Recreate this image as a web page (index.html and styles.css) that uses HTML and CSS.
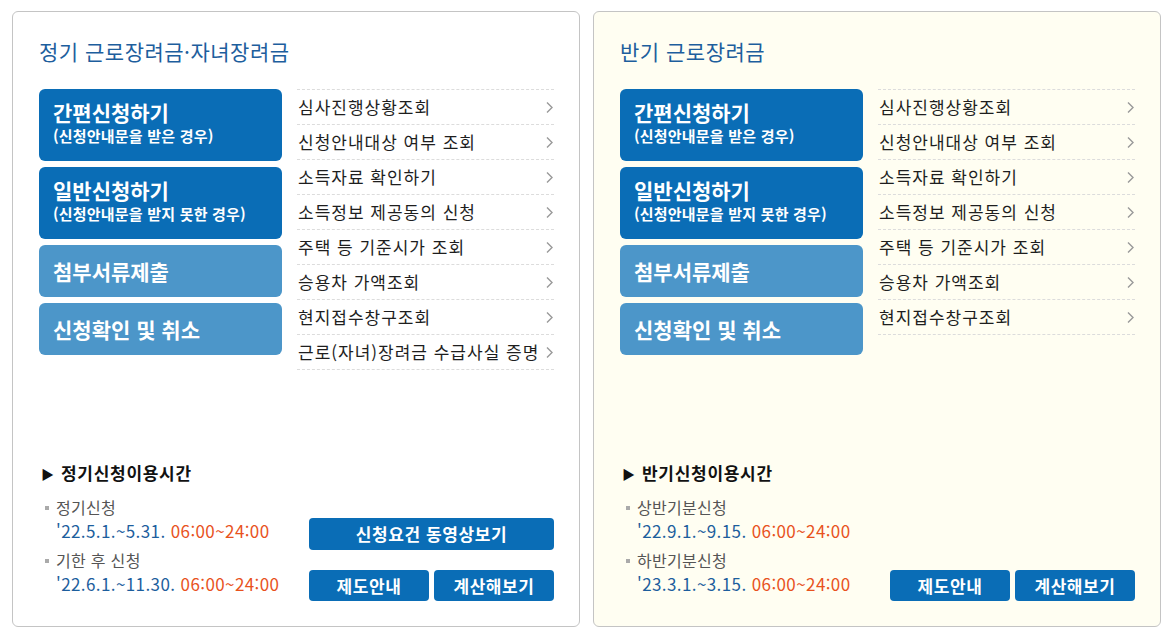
FILE: index.html
```html
<!DOCTYPE html>
<html lang="ko">

<head>
    <meta charset="UTF-8">
    <meta name="viewport" content="width=device-width, initial-scale=1.0">
    <title>근로장려금</title>
    <link rel="stylesheet" href="styles.css">
</head>

<body>
    <!-- 정기 -->
    <div class="card">
        <h2 class="cardTitle">정기 근로장려금·자녀장려금</h2>

        <div class="mainRow">
            <div class="applyBtns">
                <a class="applyBtn big" href="#">간편신청하기<span class="sub">(신청안내문을 받은 경우)</span></a>
                <a class="applyBtn big" href="#">일반신청하기<span class="sub">(신청안내문을 받지 못한 경우)</span></a>
                <a class="applyBtn small" href="#">첨부서류제출</a>
                <a class="applyBtn small" href="#">신청확인 및 취소</a>
            </div>

            <ul class="linkList">
                <li><a href="#">심사진행상황조회</a></li>
                <li><a href="#">신청안내대상 여부 조회</a></li>
                <li><a href="#">소득자료 확인하기</a></li>
                <li><a href="#">소득정보 제공동의 신청</a></li>
                <li><a href="#">주택 등 기준시가 조회</a></li>
                <li><a href="#">승용차 가액조회</a></li>
                <li><a href="#">현지접수창구조회</a></li>
                <li><a href="#">근로(자녀)장려금 수급사실 증명</a></li>
            </ul>
        </div>

        <div class="bottomRow">
            <div class="timeInfo">
                <h4><span class="tri">▶</span>정기신청이용시간</h4>
                <ul>
                    <li>
                        <p class="label">정기신청</p>
                        <p class="date">'22.5.1.~5.31. <span class="time">06:00~24:00</span></p>
                    </li>
                    <li>
                        <p class="label">기한 후 신청</p>
                        <p class="date">'22.6.1.~11.30. <span class="time">06:00~24:00</span></p>
                    </li>
                </ul>
            </div>

            <div class="subBtns">
                <a class="subBtn wide" href="#">신청요건 동영상보기</a>
                <div class="btnPair">
                    <a class="subBtn" href="#">제도안내</a>
                    <a class="subBtn" href="#">계산해보기</a>
                </div>
            </div>
        </div>
    </div>

    <!-- 반기 -->
    <div class="card half">
        <h2 class="cardTitle">반기 근로장려금</h2>

        <div class="mainRow">
            <div class="applyBtns">
                <a class="applyBtn big" href="#">간편신청하기<span class="sub">(신청안내문을 받은 경우)</span></a>
                <a class="applyBtn big" href="#">일반신청하기<span class="sub">(신청안내문을 받지 못한 경우)</span></a>
                <a class="applyBtn small" href="#">첨부서류제출</a>
                <a class="applyBtn small" href="#">신청확인 및 취소</a>
            </div>

            <ul class="linkList">
                <li><a href="#">심사진행상황조회</a></li>
                <li><a href="#">신청안내대상 여부 조회</a></li>
                <li><a href="#">소득자료 확인하기</a></li>
                <li><a href="#">소득정보 제공동의 신청</a></li>
                <li><a href="#">주택 등 기준시가 조회</a></li>
                <li><a href="#">승용차 가액조회</a></li>
                <li><a href="#">현지접수창구조회</a></li>
            </ul>
        </div>

        <div class="bottomRow">
            <div class="timeInfo">
                <h4><span class="tri">▶</span>반기신청이용시간</h4>
                <ul>
                    <li>
                        <p class="label">상반기분신청</p>
                        <p class="date">'22.9.1.~9.15. <span class="time">06:00~24:00</span></p>
                    </li>
                    <li>
                        <p class="label">하반기분신청</p>
                        <p class="date">'23.3.1.~3.15. <span class="time">06:00~24:00</span></p>
                    </li>
                </ul>
            </div>

            <div class="subBtns">
                <div class="btnPair">
                    <a class="subBtn" href="#">제도안내</a>
                    <a class="subBtn" href="#">계산해보기</a>
                </div>
            </div>
        </div>
    </div>
</body>

</html>
```

FILE: styles.css
```css
* {
    box-sizing: border-box;
}

body {
    margin: 0;
    padding: 11px 12px;
    display: flex;
    gap: 13px;
    font-family: "Noto Sans CJK KR", "Noto Sans", sans-serif;
    background-color: #fff;
}

a {
    text-decoration: none;
}

ul {
    list-style: none;
    margin: 0;
    padding: 0;
}

p {
    margin: 0;
}

div.card {
    width: 568px;
    height: 616px;
    border: 1px solid #c4c4c4;
    border-radius: 6px;
    padding: 24px 25px 25px 26px;
    display: flex;
    flex-direction: column;
    background-color: #fff;
}

div.card.half {
    background-color: #fffef2;
}

.cardTitle {
    margin: 0 0 23px 0;
    font-size: 21px;
    line-height: 30px;
    letter-spacing: 0.5px;
    font-weight: normal;
    color: #1d5e9d;
}

.mainRow {
    display: flex;
    gap: 15px;
}

/* 신청 버튼 */
.applyBtns {
    width: 243px;
    display: flex;
    flex-direction: column;
    gap: 6px;
}

.applyBtn {
    display: flex;
    flex-direction: column;
    border-radius: 6px;
    padding-left: 14px;
    color: #fff;
    font-weight: bold;
    font-size: 21px;
}

.applyBtn.big {
    height: 72px;
    padding-top: 10px;
    line-height: 26px;
    background-color: #0a6db6;
}

.applyBtn.small {
    height: 52px;
    justify-content: center;
    background-color: #4c96c9;
}

.applyBtn .sub {
    font-size: 15px;
    line-height: 22px;
    letter-spacing: 0.2px;
}

/* 링크 목록 */
.linkList {
    flex: 1;
}

.linkList li {
    border-top: 1px dashed #dcdcdc;
}

.linkList li:last-child {
    border-bottom: 1px dashed #dcdcdc;
}

.linkList a {
    display: block;
    line-height: 34px;
    padding-left: 1px;
    font-size: 17px;
    letter-spacing: 1px;
    color: #1e1e1e;
    background: url("data:image/svg+xml,%3Csvg xmlns='http://www.w3.org/2000/svg' width='7' height='11'%3E%3Cpolyline points='1,0.5 6,5.5 1,10.5' fill='none' stroke='%23999' stroke-width='1.4'/%3E%3C/svg%3E") no-repeat right 1px center;
}

/* 하단 */
.bottomRow {
    margin-top: auto;
    display: flex;
    justify-content: space-between;
    align-items: flex-end;
}

.timeInfo {
    padding-bottom: 5px;
    padding-left: 2px;
}

.timeInfo h4 {
    margin: 0 0 9px 0;
    font-size: 17px;
    line-height: 24px;
    letter-spacing: 0.7px;
    color: #111;
}

.timeInfo .tri {
    font-size: 13px;
    margin-right: 7px;
    vertical-align: 1px;
    letter-spacing: 0;
}

.timeInfo li + li {
    margin-top: 5px;
}

.timeInfo .label {
    position: relative;
    padding-left: 15px;
    font-size: 16px;
    line-height: 24px;
    letter-spacing: 0.3px;
    color: #555;
}

.timeInfo .label::before {
    content: "";
    position: absolute;
    left: 4px;
    top: 11px;
    width: 4px;
    height: 4px;
    background-color: #aaa;
}

.timeInfo .date {
    padding-left: 15px;
    font-size: 17px;
    line-height: 24px;
    letter-spacing: 0.4px;
    color: #1d5e9d;
}

.timeInfo .time {
    color: #e8521d;
}

.subBtns {
    width: 245px;
    display: flex;
    flex-direction: column;
    gap: 20px;
}

.btnPair {
    display: flex;
    gap: 5px;
}

.subBtn {
    flex: 1;
    display: block;
    height: 31px;
    line-height: 31px;
    border-radius: 4px;
    text-align: center;
    font-size: 17px;
    letter-spacing: 0.6px;
    font-weight: bold;
    color: #fff;
    background-color: #0a6db6;
}

.subBtn.wide {
    height: 32px;
    line-height: 32px;
}
```
